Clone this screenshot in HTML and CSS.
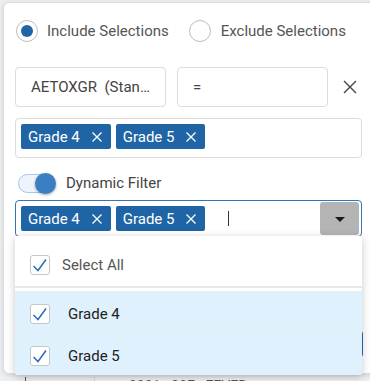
FILE: index.html
```html
<!DOCTYPE html>
<html lang="en">
<head>
    <meta charset="UTF-8">
    <meta name="viewport" content="width=device-width, initial-scale=1.0">
    <title>Filter</title>
    <link rel="stylesheet" href="styles.css">
</head>
<body>
    <div class="panel">
        <div class="radio-row">
            <label class="radio checked"><span class="dot"></span>Include Selections</label>
            <label class="radio"><span class="dot"></span>Exclude Selections</label>
        </div>

        <div class="field-row">
            <div class="field field-name">AETOXGR  (Standard Toxicity Grade)</div>
            <div class="field field-op">=</div>
            <span class="remove">
                <svg width="14" height="14" viewBox="0 0 14 14"><path d="M1 1L13 13M13 1L1 13" stroke="#444" stroke-width="1.4" fill="none"/></svg>
            </span>
        </div>

        <div class="tag-box">
            <span class="tag">Grade 4<svg class="tag-x" viewBox="0 0 10 10"><path d="M0.5 0.5L9.5 9.5M9.5 0.5L0.5 9.5" stroke="#fff" stroke-width="1.3" fill="none"/></svg></span>
            <span class="tag">Grade 5<svg class="tag-x" viewBox="0 0 10 10"><path d="M0.5 0.5L9.5 9.5M9.5 0.5L0.5 9.5" stroke="#fff" stroke-width="1.3" fill="none"/></svg></span>
        </div>

        <div class="toggle-row">
            <span class="switch"><span class="knob"></span></span>
            <span>Dynamic Filter</span>
        </div>

        <div class="multiselect">
            <span class="tag">Grade 4<svg class="tag-x" viewBox="0 0 10 10"><path d="M0.5 0.5L9.5 9.5M9.5 0.5L0.5 9.5" stroke="#fff" stroke-width="1.3" fill="none"/></svg></span>
            <span class="tag">Grade 5<svg class="tag-x" viewBox="0 0 10 10"><path d="M0.5 0.5L9.5 9.5M9.5 0.5L0.5 9.5" stroke="#fff" stroke-width="1.3" fill="none"/></svg></span>
            <span class="caret"></span>
            <span class="drop-btn"><span class="arrow"></span></span>
        </div>

        <div class="footer">
            <span class="apply-btn">Apply</span>
        </div>
    </div>

    <div class="grid-row">
        <span class="cell cell-a"></span>
        <span class="cell cell-b"></span>
        <span class="cell cell-c">0001 - 00F - FEVER</span>
    </div>

    <div class="popup">
        <div class="option select-all">
            <span class="check"><svg width="20" height="20" viewBox="0 0 20 20"><path d="M3.5 11L8 15.5L16 4.5" stroke="#2a6fb5" stroke-width="1.5" fill="none"/></svg></span>
            Select All
        </div>
        <div class="option item">
            <span class="check"><svg width="20" height="20" viewBox="0 0 20 20"><path d="M3.5 11L8 15.5L16 4.5" stroke="#2a6fb5" stroke-width="1.5" fill="none"/></svg></span>
            Grade 4
        </div>
        <div class="option item last">
            <span class="check"><svg width="20" height="20" viewBox="0 0 20 20"><path d="M3.5 11L8 15.5L16 4.5" stroke="#2a6fb5" stroke-width="1.5" fill="none"/></svg></span>
            Grade 5
        </div>
    </div>
</body>
</html>
```

FILE: styles.css
```css
body {
    margin: 0;
    height: 381px;
    overflow: hidden;
    background: #eeeff1;
    font-family: Roboto, 'Liberation Sans', sans-serif;
    font-size: 15px;
    color: #444;
    position: relative;
}
.panel {
    margin: 2px 0 0 3px;
    width: 347px;
    height: 353px;
    padding: 17px 12px 0 11px;
    background: #fff;
    border: 1px solid #dcdcdc;
    border-radius: 6px;
    box-shadow: 0 1px 5px rgba(0, 0, 0, 0.12);
}
.radio-row {
    display: flex;
    align-items: center;
    height: 22px;
    color: #555;
}
.radio {
    display: flex;
    align-items: center;
    gap: 9px;
    margin-left: 1px;
}
.radio + .radio {
    margin-left: 20px;
    gap: 10px;
}
.dot {
    width: 20px;
    height: 20px;
    border: 1px solid #bdbdbd;
    border-radius: 50%;
    display: flex;
    align-items: center;
    justify-content: center;
}
.radio.checked .dot::after {
    content: '';
    width: 12px;
    height: 12px;
    border-radius: 50%;
    background: #1f65a5;
}
.field-row {
    display: flex;
    align-items: center;
    gap: 11px;
    margin-top: 25px;
}
.field {
    box-sizing: border-box;
    width: 151px;
    height: 40px;
    line-height: 38px;
    border: 1px solid #dcdcdc;
    border-radius: 4px;
    padding: 0 10px 0 15px;
    white-space: pre;
    overflow: hidden;
    text-overflow: ellipsis;
}
.field-op {
    padding-left: 15px;
}
.remove {
    display: flex;
    margin-left: 4px;
}
.tag-box {
    box-sizing: border-box;
    height: 40px;
    margin-top: 11px;
    padding: 5px;
    border: 1px solid #dcdcdc;
    border-radius: 4px;
    display: flex;
    gap: 5px;
}
.tag {
    display: inline-flex;
    align-items: center;
    height: 25px;
    padding: 0 9px 0 7px;
    background: #1f65a5;
    color: #fff;
    border-radius: 2px;
}
.tag-x {
    width: 10px;
    height: 10px;
    margin-left: 12px;
}
.toggle-row {
    display: flex;
    align-items: center;
    height: 20px;
    margin-top: 15px;
}
.switch {
    position: relative;
    width: 35px;
    height: 17px;
    margin-left: 3px;
    margin-right: 11px;
    border: 1px solid #a9c6e6;
    border-radius: 10px;
    background: #eef4fb;
}
.knob {
    position: absolute;
    right: -2px;
    top: -2px;
    width: 21px;
    height: 21px;
    border-radius: 50%;
    background: #3a7fc4;
    box-shadow: 0 1px 3px rgba(0, 0, 0, 0.35);
}
.multiselect {
    box-sizing: border-box;
    height: 37px;
    margin-top: 7px;
    padding: 0 2px 0 5px;
    border: 1px solid #3574b8;
    border-radius: 4px;
    display: flex;
    align-items: center;
    gap: 5px;
}
.caret {
    width: 1px;
    height: 15px;
    background: #333;
    margin-left: 18px;
}
.drop-btn {
    margin-left: auto;
    width: 39px;
    height: 33px;
    background: #b4b4b4;
    border-radius: 3px;
    display: flex;
    align-items: center;
    justify-content: center;
}
.arrow {
    width: 0;
    height: 0;
    border-left: 5px solid transparent;
    border-right: 5px solid transparent;
    border-top: 5px solid #1a1a1a;
    margin-top: 2px;
}
.footer {
    display: flex;
    justify-content: flex-end;
    margin: 94px -1px 0 0;
}
.apply-btn {
    width: 90px;
    height: 26px;
    line-height: 26px;
    text-align: center;
    background: #2a6fb5;
    color: #fff;
    border-radius: 0 3px 3px 0;
}
.grid-row {
    display: flex;
    height: 20px;
    margin-top: 3px;
}
.cell {
    height: 20px;
    border-right: 1px solid #d5d5d5;
}
.cell-a {
    width: 25px;
    border-right-color: #555;
}
.cell-b {
    width: 68px;
}
.cell-c {
    padding-left: 34px;
    border: none;
    color: #555;
    font-size: 14px;
    line-height: 14px;
    padding-top: 2px;
}
.popup {
    position: absolute;
    left: 15px;
    top: 236px;
    width: 347px;
    background: #fff;
    box-shadow: 0 2px 8px rgba(0, 0, 0, 0.22);
    border-radius: 0 0 3px 3px;
}
.option {
    display: flex;
    align-items: center;
    box-sizing: border-box;
    padding-left: 15px;
}
.select-all {
    height: 52px;
    padding-top: 8px;
    gap: 12px;
    color: #555;
    border-bottom: 2px solid #e9e9e9;
    margin-bottom: 3px;
}
.item {
    height: 41px;
    padding-top: 6px;
    gap: 18px;
    color: #222;
    background: #dff1fd;
    border-bottom: 1px solid #e6eef3;
}
.item.last {
    height: 43px;
    padding-top: 4px;
    border-bottom: none;
    border-radius: 0 0 3px 3px;
}
.check {
    box-sizing: border-box;
    width: 20px;
    height: 20px;
    border: 1px solid #c6c6c6;
    border-radius: 3px;
    background: #fff;
    display: flex;
}
.check svg {
    margin: -1px;
}
```
